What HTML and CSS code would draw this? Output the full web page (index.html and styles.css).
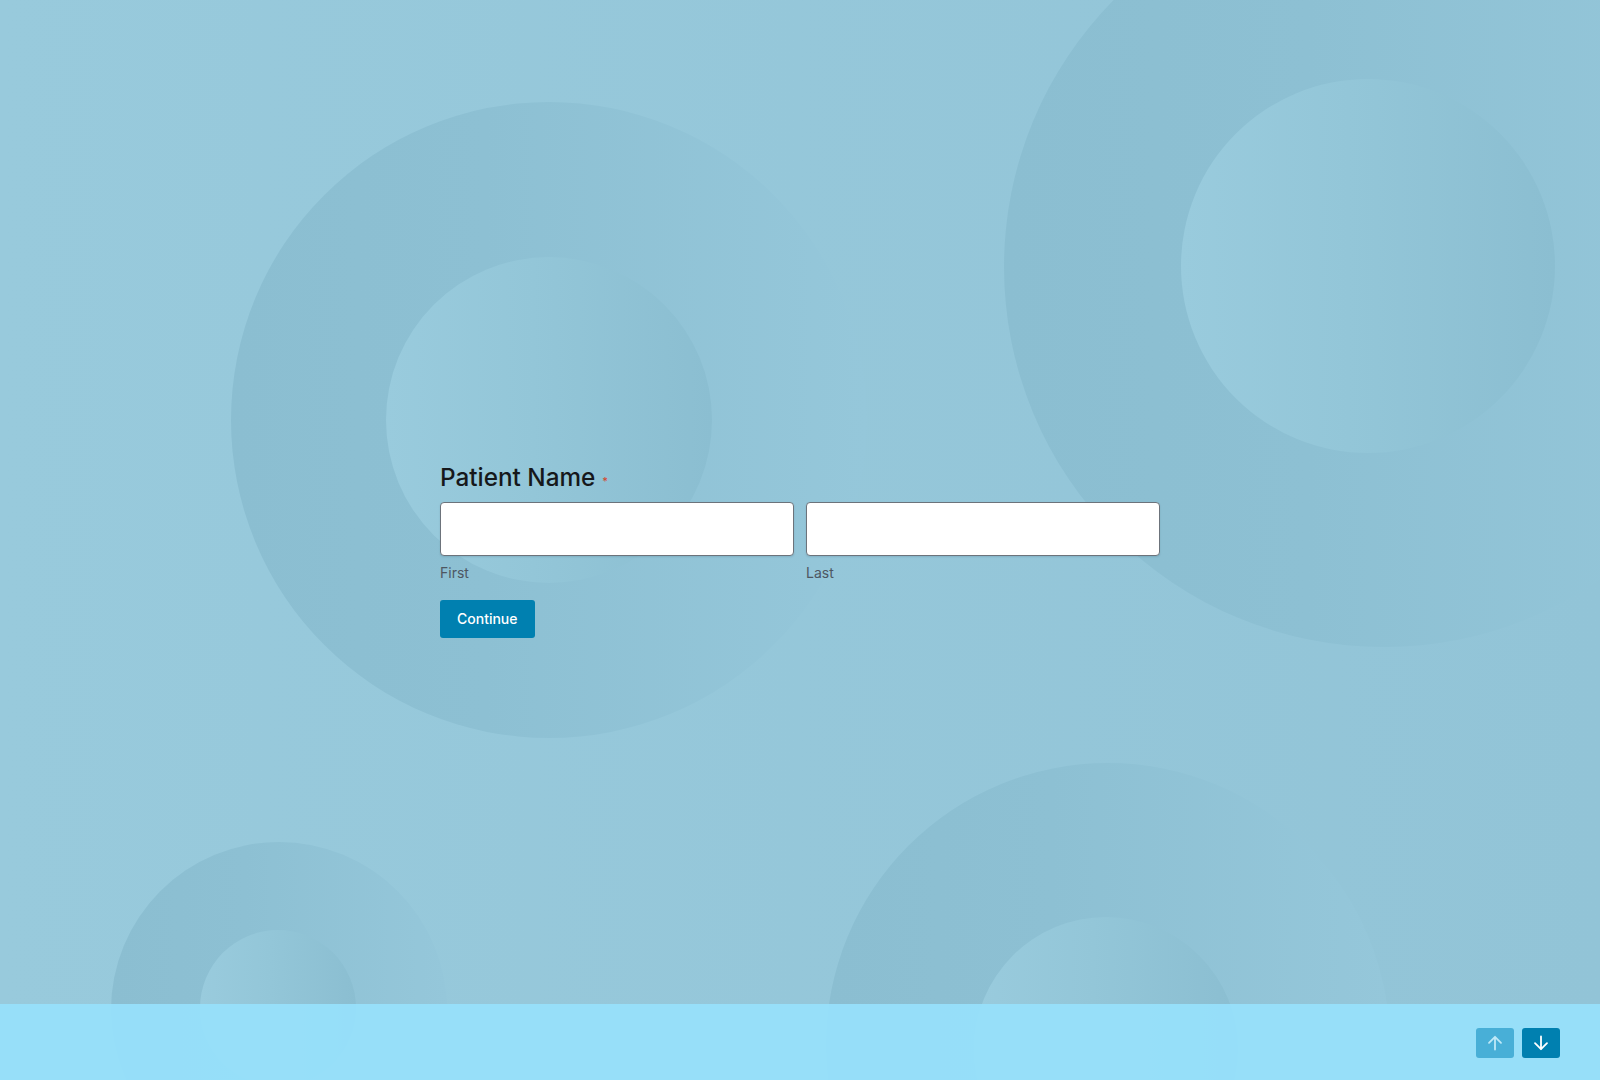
FILE: index.html
```html
<!DOCTYPE html>
<html lang="en">
<head>
<meta charset="utf-8">
<title>Patient Name</title>
<link rel="stylesheet" href="styles.css">
</head>
<body>
<div class="bg" aria-hidden="true">
  <div class="ring ring-1"><div class="hole"></div></div>
  <div class="ring ring-2"><div class="hole"></div></div>
  <div class="ring ring-3"><div class="hole"></div></div>
  <div class="ring ring-4"><div class="hole"></div></div>
</div>
<main class="stage">
  <form class="form">
    <h1 class="q-title">Patient Name<span class="req">*</span></h1>
    <div class="name-row">
      <div class="field">
        <input class="text-input" type="text" aria-label="First">
        <label class="sublabel">First</label>
      </div>
      <div class="field">
        <input class="text-input" type="text" aria-label="Last">
        <label class="sublabel">Last</label>
      </div>
    </div>
    <button type="button" class="btn-continue">Continue</button>
  </form>
</main>
<footer class="footer">
  <button type="button" class="nav-btn nav-up" aria-label="Previous">
    <svg width="16" height="16" viewBox="0 0 16 16" fill="none" stroke="currentColor" stroke-width="1.8" stroke-linecap="round" stroke-linejoin="round"><path d="M8 14.5V1.8M2 7.8l6-6 6 6"/></svg>
  </button>
  <button type="button" class="nav-btn nav-down" aria-label="Next">
    <svg width="16" height="16" viewBox="0 0 16 16" fill="none" stroke="currentColor" stroke-width="1.8" stroke-linecap="round" stroke-linejoin="round"><path d="M8 1.5v12.7M2 8.2l6 6 6-6"/></svg>
  </button>
</footer>
</body>
</html>
```
FILE: styles.css
```css
* { box-sizing: border-box; }
html, body { margin: 0; padding: 0; }
body {
  width: 1600px;
  height: 1080px;
  overflow: hidden;
  position: relative;
  font-family: Inter, "Noto Sans", "Liberation Sans", sans-serif;
  background: linear-gradient(to right, #98cadc, #92c4d7);
  display: flex;
  flex-direction: column;
}
.bg {
  position: absolute;
  inset: 0;
  overflow: hidden;
  z-index: 0;
}
.ring {
  position: absolute;
  border-radius: 50%;
  background: linear-gradient(to right, #8bbed1 0%, #8dc0d3 40%, #95c7da 100%);
}
.hole {
  position: absolute;
  border-radius: 50%;
  background: linear-gradient(to right, #99cbdd 0%, #93c6d8 45%, #8bbed1 100%);
}
.ring-1 { left: 231px; top: 102px; width: 636px; height: 636px; }
.ring-1 .hole { left: 155px; top: 155px; width: 326px; height: 326px; }
.ring-2 { left: 1004px; top: -113px; width: 760px; height: 760px; }
.ring-2 .hole { left: 177px; top: 192px; width: 374px; height: 374px; }
.ring-3 { left: 111px; top: 842px; width: 336px; height: 336px; }
.ring-3 .hole { left: 89px; top: 88px; width: 156px; height: 156px; }
.ring-4 { left: 826px; top: 763px; width: 564px; height: 564px; }
.ring-4 .hole { left: 148px; top: 154px; width: 264px; height: 264px; }

.stage {
  position: relative;
  z-index: 1;
  height: 1004px;
  flex: none;
  display: flex;
  justify-content: center;
}
.form {
  width: 720px;
  padding-top: 462px;
  display: flex;
  flex-direction: column;
  align-items: flex-start;
}
.q-title {
  margin: 0 0 5px;
  font-size: 24.3px;
  line-height: 30px;
  font-weight: 450;
  color: #16181b;
  display: flex;
  align-items: baseline;
}
.req {
  color: #d3462f;
  font-size: 11px;
  margin-left: 7px;
  position: relative;
  top: -1px;
}
.name-row {
  width: 100%;
  display: grid;
  grid-template-columns: 1fr 1fr;
  column-gap: 12px;
}
.field {
  display: flex;
  flex-direction: column;
}
.text-input {
  height: 54px;
  width: 100%;
  background: #ffffff;
  border: 1px solid #6c737b;
  border-radius: 4px;
  margin: 0;
  padding: 0 12px;
  font: inherit;
  box-shadow: 0 1px 2px rgba(0, 40, 60, 0.12);
}
.sublabel {
  margin-top: 8px;
  font-size: 14px;
  line-height: 18px;
  color: #4d5762;
}
.btn-continue {
  margin-top: 18px;
  height: 38px;
  padding: 0 17px;
  border: 0;
  border-radius: 3px;
  background: #0080b0;
  color: #ffffff;
  font-family: inherit;
  font-size: 14px;
  font-weight: 500;
  line-height: 38px;
}

.footer {
  position: relative;
  z-index: 1;
  height: 76px;
  flex: none;
  background: rgba(151, 224, 251, 0.94);
  display: flex;
  justify-content: flex-end;
  align-items: flex-start;
  gap: 8px;
  padding: 24px 40px 0 0;
}
.nav-btn {
  width: 38px;
  height: 30px;
  border: 0;
  border-radius: 3px;
  padding: 0;
  display: flex;
  align-items: center;
  justify-content: center;
}
.nav-up { background: #48afd7; color: #bfe9f8; }
.nav-down { background: #0080b0; color: #ffffff; }
```
